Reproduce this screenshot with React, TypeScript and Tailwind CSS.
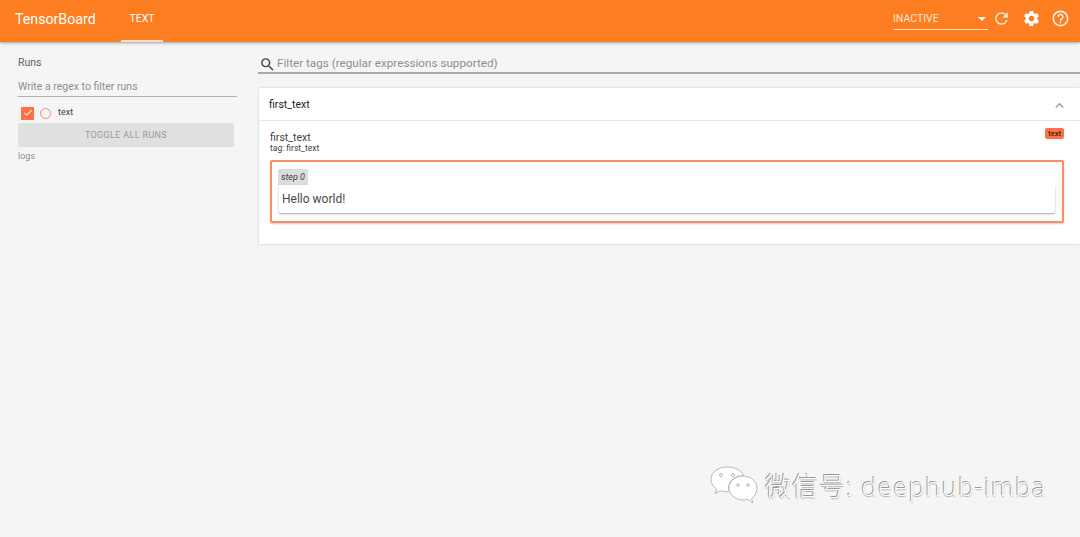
import { Check } from "lucide-react";
import { MdExpandLess, MdHelpOutline, MdRefresh, MdSearch, MdSettings } from "react-icons/md";

function Header() {
  return (
    <header className="relative z-10 flex h-[42px] items-center bg-[#fc7e21] pl-[15px] pr-[10px] text-white shadow-[0_1px_3px_rgba(0,0,0,0.35)]">
      <span className="w-[106px] pb-[4px] text-[14.2px] leading-none">TensorBoard</span>
      <div className="flex h-[42px] w-[42px] items-center justify-center border-b-2 border-[#ffe0c8] pb-[3px] text-[10.5px] font-normal">
        TEXT
      </div>
      <div className="ml-auto flex items-center pb-[5px]">
        <div className="flex h-[22px] w-[95px] items-center justify-between border-b border-[#ffd9bd] pr-[2px] pt-[1px] text-[10.5px] text-[#ffe6d3]">
          <span>INACTIVE</span>
          <span className="h-0 w-0 border-x-[4px] border-t-[4px] border-x-transparent border-t-white" />
        </div>
        <MdRefresh size={19} className="ml-[4px] text-[#ffe6d3]" />
        <MdSettings size={19} className="ml-[11px]" />
        <MdHelpOutline size={19} className="ml-[10px] text-[#ffeee2]" />
      </div>
    </header>
  );
}

function Sidebar() {
  return (
    <aside className="w-[258px] shrink-0 pl-[18px] pt-[14px] text-[#616161]">
      <div className="text-[10.5px] leading-[13px]">Runs</div>
      <div className="mt-[9px] h-[19px] w-[219px] border-b border-[#b0b0b0] pt-[2px] text-[10.5px] leading-[14px] text-[#8f8f8f]">
        Write a regex to filter runs
      </div>
      <div className="mt-[9px] flex h-[14px] items-center pl-[3px]">
        <span className="flex h-[13px] w-[13px] items-center justify-center rounded-[1px] bg-[#ff7043]">
          <Check size={10} className="text-white" strokeWidth={2.5} />
        </span>
        <span className="ml-[6px] h-[11px] w-[11px] rounded-full border border-[#ff8a65]" />
        <span className="ml-[7px] text-[9px] text-[#424242]">text</span>
      </div>
      <div className="mt-[3px] flex h-[24px] w-[216px] items-center justify-center rounded-[2px] bg-[#e0e0e0] pt-[2px] text-[9px] tracking-[0.35px] text-[#9a9a9a]">
        TOGGLE ALL RUNS
      </div>
      <div className="mt-[3px] text-[9px] leading-[12px] text-[#8f8f8f]">logs</div>
    </aside>
  );
}

function TextCard() {
  return (
    <section className="ml-px bg-white shadow-[0_0_2px_rgba(0,0,0,0.2)]">
      <div className="flex h-[33px] items-center justify-between border-b border-[#e6e6e6] pl-[10px] pr-[12px] pt-[2px] text-[10.5px] text-[#212121]">
        <span>first_text</span>
        <MdExpandLess size={17} className="text-[#9e9e9e]" />
      </div>
      <div className="h-[123px] pl-[11px] pr-[16px] pt-[11px]">
        <div className="flex items-start justify-between">
          <div className="text-[#424242]">
            <div className="text-[10.5px] leading-[11px]">first_text</div>
            <div className="text-[8.5px] leading-[10px]">tag: first_text</div>
          </div>
          <span className="-mt-[4px] rounded-[2px] bg-[#ff7043] px-[3px] text-[7.5px] font-medium leading-[11px] text-[#3a2018]">
            text
          </span>
        </div>
        <div className="mt-[7px] h-[63px] rounded-[2px] border-2 border-[#ff8a65] pl-[6px] pr-[7px] pt-[7px] shadow-[0_1px_2px_rgba(0,0,0,0.2)]">
          <span className="block h-[16px] w-[30px] rounded-t-[2px] bg-[#dcdcdc] text-center text-[9px] italic leading-[16px] text-[#424242]">
            step 0
          </span>
          <div className="ml-px flex h-[28px] items-center rounded-b-[2px] bg-white pl-[3px] text-[12px] text-[#4a4a4a] shadow-[0_1px_2px_rgba(0,0,0,0.35)]">
            Hello world!
          </div>
        </div>
      </div>
    </section>
  );
}

function Watermark() {
  return (
    <div className="absolute left-[710px] top-[466px] flex items-center">
      <svg width="48" height="40" viewBox="0 0 48 40" fill="#ffffff" stroke="#a8a8a8" strokeWidth="0.8">
        <path d="M17 1C8 1 1 6.500 1 13.500c0 4 2.300 7.300 5.800 9.600L5 27.500l5.500-2.800c2 .6 4 .9 6.500.9 1 0 1.500 0 2.500-.1-.5-1.500-.8-2.500-.8-4 0-6.500 6.500-12 14.800-12-1.500-5-8.500-8.500-16.500-8.500z" />
        <path d="M47 22c0-6.500-6.500-12-14-12s-14 5.500-14 12 6.500 12 14 12c1.700 0 3.200-.2 4.800-.7L43 37l-1.500-4.300C44.800 30.300 47 26.500 47 22z" />
        <circle cx="11" cy="9" r="1.500" fill="none" />
        <circle cx="23" cy="9" r="1.500" fill="none" />
        <circle cx="28" cy="19" r="1.300" fill="none" />
        <circle cx="38" cy="19" r="1.300" fill="none" />
      </svg>
      <span className="ml-[7px] font-['Open_Sans','Noto_Sans_CJK_SC',sans-serif] text-[26px] font-light leading-none tracking-[1.1px] text-white [text-shadow:-1px_-1px_0_#999999,0_1px_1px_#b0b0b0]">
        微信号: deephub-imba
      </span>
    </div>
  );
}

export default function App() {
  return (
    <div className="relative h-[537px] w-[1080px] overflow-hidden bg-[#f5f5f5] font-['Roboto',sans-serif]">
      <Header />
      <div className="flex">
        <Sidebar />
        <main className="min-w-0 flex-1">
          <div className="flex h-[32px] items-center gap-[1px] border-b-2 border-[#a8a8a8] pl-[1px] pt-[14px]">
            <MdSearch size={17} className="text-[#424242]" />
            <span className="text-[11.7px] leading-none text-[#8f8f8f]">Filter tags (regular expressions supported)</span>
          </div>
          <div className="mt-[14px]">
            <TextCard />
          </div>
        </main>
      </div>
      <Watermark />
    </div>
  );
}
